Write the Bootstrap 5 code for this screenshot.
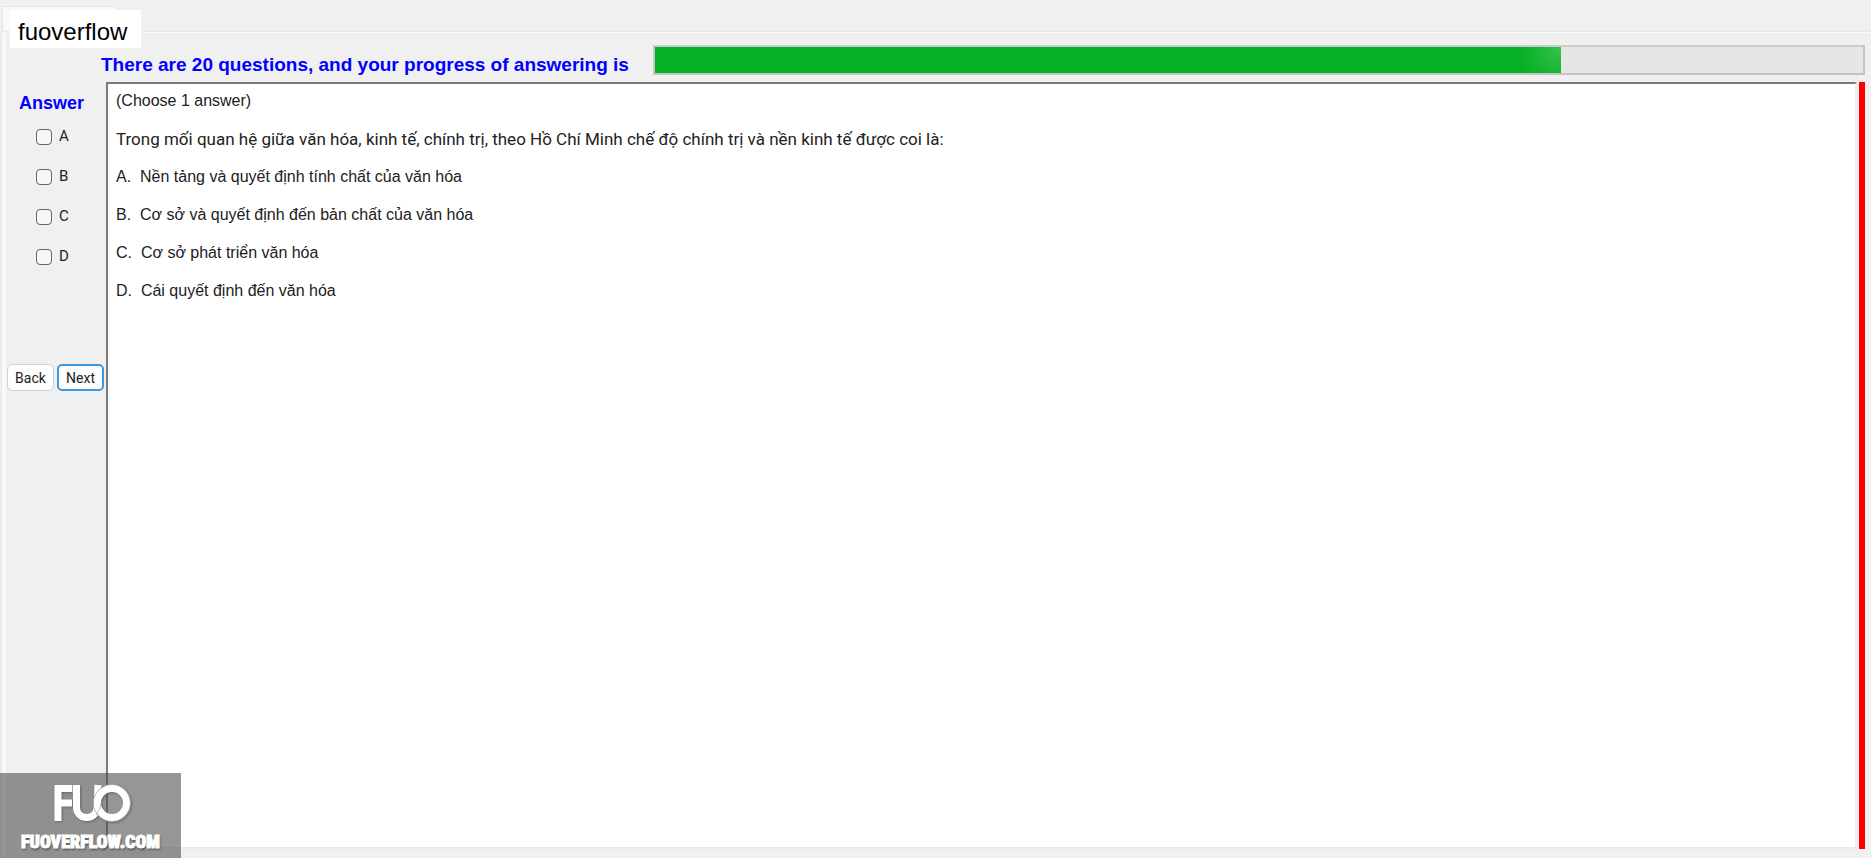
<!DOCTYPE html>
<html lang="vi">
<head>
<meta charset="utf-8">
<meta name="viewport" content="width=device-width, initial-scale=1">
<title>fuoverflow</title>
<link href="https://cdn.jsdelivr.net/npm/bootstrap@5.3.0/dist/css/bootstrap.min.css" rel="stylesheet">
<style>
  body { background: #f0f0f0; color: #222; font-family: Roboto, "Liberation Sans", Arial, sans-serif; }
  .exam-page { padding: 6px 0 0 2px; }
  .tab-strip { height: 26px; }
  .tab-head { width: 115px; background: #f9f9f9; border: 1px solid #e6e6e6; border-bottom: 0; }
  .tab-title { left: 10px; top: 10px; width: 131px; height: 38px; padding-left: 8px; background: #fff; color: #000; font-family: "Liberation Sans", Arial, sans-serif; font-size: 24px; line-height: 44px; }
  .tab-panel { border-left: 4px solid #f9f9f9; border-top: 1px solid #fafafa; box-shadow: 0 -1px #e9e9e9, -1px 0 #e6e6e6; padding: 12px 6px 9px 0; }
  .blue-text { color: #00f; font-family: "Liberation Sans", Arial, sans-serif; font-weight: 700; font-size: 18px; line-height: 20px; }
  .status-row { height: 30px; margin-bottom: 7px; padding-left: 95px; gap: 24px; }
  .status-row .blue-text { font-size: 19px; }
  .exam-progress { height: 30px; border: 2px solid #c4c4c4; border-top-color: #ccc; border-radius: 0; background: #e6e6e6; }
  .exam-progress .progress-bar { background: radial-gradient(circle at 100% 0, #37c34e 0, #19b733 24px, #06b025 44px); }
  .side { width: 100px; padding-top: 11px; }
  .side .blue-text { padding-left: 13px; }
  .choices { padding: 16px 0 0 30px; gap: 24px; }
  .choice { height: 16px; gap: 7px; font-size: 15px; line-height: 15px; }
  .choice .form-check-input { width: 16px; height: 16px; border: 1px solid #666; border-radius: 4px; background-color: #f6f6f6; }
  .nav-buttons { margin-top: 99px; padding-left: 1px; gap: 3px; }
  .nav-buttons .btn { width: 47px; height: 27px; padding: 0; border: 1px solid #d2d2d2; border-radius: 5px; background: #fdfdfd; color: #222; font-size: 14px; line-height: 24px; }
  .nav-buttons .btn-next { border: 2px solid #3f97dc; }
  .viewer { background: #fff; border: 2px solid #7a7a7a; border-color: #7a7a7a #eee #eaeaea #7a7a7a; padding: 7px 8px; font-family: "Liberation Sans", Arial, sans-serif; font-size: 16px; line-height: 20px; }
  .viewer p { margin: 0 0 18px; }
  .viewer .stem { font-family: Roboto, sans-serif; font-size: 17px; }
  .viewer ol { display: grid; gap: 18px; }
  .red-bar { width: 6px; margin-left: 2px; background: #f00; }
  .watermark { left: 0; bottom: 0; width: 181px; height: 85px; padding-top: 10px; background: rgba(80,80,80,.6); color: #fff; }
  .watermark svg { filter: drop-shadow(1px 1px 1px #666); }
  .site-name { font-family: "Roboto Condensed", Roboto, sans-serif; font-weight: 900; font-size: 18px; line-height: 38px; -webkit-text-stroke: 1px #fff; text-shadow: 1px 2px 2px #555; }
</style>
</head>
<body>
<main class="exam-page min-vh-100 d-flex flex-column position-relative">
  <div class="tab-strip d-flex"><div class="tab-head"></div></div>
  <div class="tab-title position-absolute">fuoverflow</div>
  <section class="tab-panel flex-grow-1 d-flex flex-column">
    <div class="status-row d-flex align-items-end">
      <div class="blue-text text-nowrap" id="progress-label">There are 20 questions, and your progress of answering is</div>
      <div class="progress exam-progress flex-grow-1" role="progressbar" aria-labelledby="progress-label" aria-valuenow="75" aria-valuemin="0" aria-valuemax="100">
        <div class="progress-bar" style="width:75%"></div>
      </div>
    </div>
    <div class="d-flex flex-grow-1">
      <aside class="side flex-shrink-0">
        <div class="blue-text">Answer</div>
        <div class="choices d-flex flex-column">
          <div class="choice d-flex"><input class="form-check-input m-0" type="checkbox" id="a"><label for="a">A</label></div>
          <div class="choice d-flex"><input class="form-check-input m-0" type="checkbox" id="b"><label for="b">B</label></div>
          <div class="choice d-flex"><input class="form-check-input m-0" type="checkbox" id="c"><label for="c">C</label></div>
          <div class="choice d-flex"><input class="form-check-input m-0" type="checkbox" id="d"><label for="d">D</label></div>
        </div>
        <div class="nav-buttons d-flex">
          <button type="button" class="btn">Back</button>
          <button type="button" class="btn btn-next">Next</button>
        </div>
      </aside>
      <article class="viewer flex-grow-1">
        <p>(Choose 1 answer)</p>
        <p class="stem">Trong mối quan hệ giữa văn hóa, kinh tế, chính trị, theo Hồ Chí Minh chế độ chính trị và nền kinh tế được coi là:</p>
        <ol class="list-unstyled mb-0">
          <li>A.&nbsp; Nền tảng và quyết định tính chất của văn hóa</li>
          <li>B.&nbsp; Cơ sở và quyết định đến bản chất của văn hóa</li>
          <li>C.&nbsp; Cơ sở phát triển văn hóa</li>
          <li>D.&nbsp; Cái quyết định đến văn hóa</li>
        </ol>
      </article>
      <div class="red-bar flex-shrink-0"></div>
    </div>
  </section>
  <div class="watermark position-absolute d-flex flex-column align-items-center">
    <svg class="flex-shrink-0" width="80" height="40" viewBox="0 0 80 40" fill="none" aria-hidden="true">
      <path d="M7 38V5.500H21M7 20H21" stroke="#fff" stroke-width="7"/>
      <path d="M25.500 2V24C25.500 38 46 38 46 24L47 2" stroke="#fff" stroke-width="7"/>
      <circle cx="61" cy="20" r="18.500" stroke="#aaa"/>
      <circle cx="61" cy="20" r="14.500" stroke="#fff" stroke-width="7"/>
      <path d="M21.500 2v8" stroke="#aaa"/>
      <path d="M45 32Q50 27 50 20" stroke="#bbb"/>
    </svg>
    <div class="site-name">FUOVERFLOW.COM</div>
  </div>
</main>
<script src="https://cdn.jsdelivr.net/npm/bootstrap@5.3.0/dist/js/bootstrap.bundle.min.js"></script>
</body>
</html>
